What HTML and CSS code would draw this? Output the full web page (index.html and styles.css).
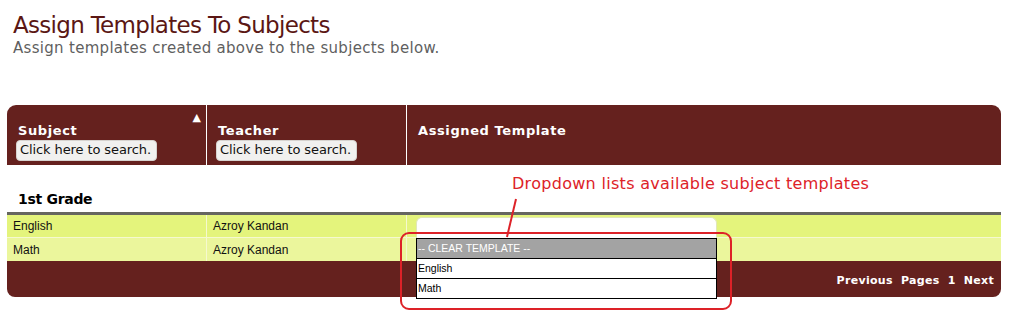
FILE: index.html
```html
<!DOCTYPE html>
<html lang="en">
<head>
    <meta charset="UTF-8">
    <title>Assign Templates To Subjects</title>
    <link rel="stylesheet" href="styles.css">
</head>
<body>
    <div class="page">
        <h1>Assign Templates To Subjects</h1>
        <p class="subtitle">Assign templates created above to the subjects below.</p>

        <div class="grid-wrap">
            <table class="grid">
                <thead>
                    <tr>
                        <th class="col-subject">
                            <span class="sort">&#9650;</span>
                            <div class="th-label">Subject</div>
                            <input class="search" type="text" value="Click here to search.">
                        </th>
                        <th class="col-teacher">
                            <div class="th-label">Teacher</div>
                            <input class="search" type="text" value="Click here to search.">
                        </th>
                        <th class="col-template">
                            <div class="th-label">Assigned Template</div>
                        </th>
                    </tr>
                </thead>
                <tbody>
                    <tr class="group">
                        <td colspan="3">1st Grade</td>
                    </tr>
                    <tr class="row odd">
                        <td>English</td>
                        <td>Azroy Kandan</td>
                        <td></td>
                    </tr>
                    <tr class="row even">
                        <td>Math</td>
                        <td>Azroy Kandan</td>
                        <td></td>
                    </tr>
                </tbody>
                <tfoot>
                    <tr>
                        <td colspan="3" class="pager">
                            <span>Previous</span>
                            <span>Pages</span>
                            <span>1</span>
                            <span>Next</span>
                        </td>
                    </tr>
                </tfoot>
            </table>

            <!-- open dropdown over the English row -->
            <div class="dropdown">
                <div class="dd-input"></div>
                <ul class="dd-list">
                    <li class="dd-clear">-- CLEAR TEMPLATE --</li>
                    <li>English</li>
                    <li>Math</li>
                </ul>
            </div>

            <!-- callout -->
            <div class="callout-text">Dropdown lists available subject templates</div>
            <svg class="callout-line" width="20" height="40" viewBox="0 0 20 40">
                <line x1="16" y1="1" x2="7" y2="39" stroke="#dd2228" stroke-width="2"/>
            </svg>
            <div class="callout-box"></div>
        </div>
    </div>
</body>
</html>
```

FILE: styles.css
```css
body {
    margin: 0;
    min-height: 321px;
    background: #ffffff;
    font-family: "DejaVu Sans", Verdana, sans-serif;
}

.page {
    padding: 0 12px 30px 7px;
    position: relative;
}

h1 {
    margin: 11px 0 0 6px;
    font-size: 23px;
    font-weight: normal;
    color: #5b1714;
    letter-spacing: -0.7px;
    line-height: 28px;
}

.subtitle {
    margin: 0 0 0 6px;
    font-size: 15px;
    color: #5f5f5f;
    letter-spacing: 0.3px;
    line-height: 19px;
}

.grid-wrap {
    position: relative;
    margin-top: 47px;
    width: 994px;
}

.grid {
    width: 994px;
    border-collapse: separate;
    border-spacing: 0;
    table-layout: fixed;
}

.grid th {
    background: #65211e;
    color: #ffffff;
    text-align: left;
    vertical-align: top;
    height: 60px;
    padding: 0 0 0 11px;
    position: relative;
    font-size: 13px;
}

.grid thead tr th:first-child {
    border-top-left-radius: 9px;
}

.grid thead tr th:last-child {
    border-top-right-radius: 9px;
}

.col-subject {
    width: 188px;
    border-right: 1px solid #ffffff;
}

.col-teacher {
    width: 188px;
    border-right: 1px solid #ffffff;
}

.th-label {
    margin-top: 18px;
    letter-spacing: 0.6px;
    line-height: 16px;
}

.sort {
    position: absolute;
    top: 6px;
    right: 5px;
    font-size: 11px;
}

.search {
    display: block;
    width: 141px;
    height: 21px;
    box-sizing: border-box;
    margin: 1px 0 0 -2px;
    padding: 0 3px 2px;
    border: 1px solid #d6d2cf;
    border-radius: 4px;
    background: #f1f0ef;
    font-family: "DejaVu Sans", Verdana, sans-serif;
    font-size: 13px;
    letter-spacing: -0.1px;
    color: #111111;
}

.group td {
    height: 47px;
    padding: 0 0 0 11px;
    vertical-align: bottom;
    font-weight: bold;
    font-size: 14px;
    color: #000000;
    border-bottom: 3px solid #666660;
    line-height: 26px;
    letter-spacing: -0.3px;
}

.row td {
    height: 22px;
    padding: 0 0 0 6px;
    font-family: "Liberation Sans", Arial, sans-serif;
    font-size: 12px;
    color: #111111;
    border-right: 1px solid #f5f9cf;
}

.row td:last-child {
    border-right: none;
}

.odd td {
    background: #e4f47c;
    border-bottom: 1px solid #f5f9cf;
}

.even td {
    height: 23px;
    background: #ebf69c;
}

.pager {
    background: #65211e;
    color: #ffffff;
    text-align: right;
    height: 33px;
    padding: 3px 7px 0 0;
    font-size: 11px;
    font-weight: bold;
    letter-spacing: 0.3px;
    border-bottom-left-radius: 8px;
    border-bottom-right-radius: 8px;
}

.pager span {
    margin-left: 4px;
}

.dropdown {
    position: absolute;
    left: 409px;
    top: 112px;
    width: 301px;
}

.dd-input {
    height: 20px;
    background: #ffffff;
    border: 1px solid #e1e7b8;
    border-radius: 6px 6px 0 0;
    border-bottom: none;
}

.dd-list {
    list-style: none;
    margin: 0;
    padding: 0;
    border: 1px solid #000000;
    background: #ffffff;
}

.dd-list li {
    height: 19px;
    line-height: 19px;
    padding-left: 1px;
    font-family: "Liberation Sans", Arial, sans-serif;
    font-size: 10.5px;
    color: #000000;
    border-top: 1px solid #000000;
}

.dd-list li:first-child {
    border-top: none;
}

.dd-list .dd-clear {
    background: #a3a3a3;
    color: #ffffff;
}

.callout-text {
    position: absolute;
    left: 505px;
    top: 69px;
    font-size: 16px;
    color: #dd2228;
    letter-spacing: 0.3px;
}

.callout-line {
    position: absolute;
    left: 493px;
    top: 93px;
}

.callout-box {
    position: absolute;
    left: 393px;
    top: 127px;
    width: 328px;
    height: 74px;
    border: 2px solid #dd2228;
    border-radius: 9px;
}
```
